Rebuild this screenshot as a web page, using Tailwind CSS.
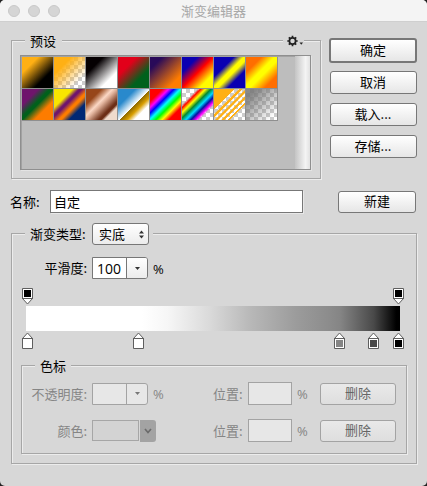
<!DOCTYPE html>
<html lang="zh-CN">
<head>
<meta charset="utf-8">
<title>渐变编辑器</title>
<script src="https://cdn.jsdelivr.net/npm/@tailwindcss/browser@4"></script>
</head>
<body class="bg-[#222] w-[427px] h-[486px] overflow-hidden font-['Noto_Sans_CJK_SC',sans-serif] text-[13px] leading-[16px] text-black">
<svg class="hidden">
  <defs>
    <g id="stop-up">
      <path d="M.5 6.5L5.5 1L10.5 6.5V16.5H.5Z" fill="#fff" stroke="#5e5e5e"/>
      <path d="M0 6.5H11" stroke="#5e5e5e"/>
    </g>
    <g id="stop-down">
      <path d="M.5 .5H10.5V10.5L5.5 16L.5 10.5Z" fill="#fff" stroke="#5e5e5e"/>
      <path d="M0 10.5H11" stroke="#5e5e5e"/>
    </g>
  </defs>
</svg>
<div class="flex flex-col w-[427px] h-[486px] rounded-[5px] bg-[#d7d7d7] overflow-hidden">
  <!-- title bar -->
  <header class="grid grid-cols-[62px_1fr_62px] items-center h-[22px] shrink-0 bg-[#f4f4f4] border-b border-[#cfcfcf]">
    <div class="flex gap-2 pl-2">
      <i class="size-3 rounded-full bg-[#d5d5d5] border border-[#c8c8c8]"></i>
      <i class="size-3 rounded-full bg-[#d5d5d5] border border-[#c8c8c8]"></i>
      <i class="size-3 rounded-full bg-[#d5d5d5] border border-[#c8c8c8]"></i>
    </div>
    <h1 class="text-center text-[#a8a8a8]">渐变编辑器</h1>
  </header>

  <!-- presets and actions -->
  <div class="flex mt-[11px] ml-[11px] h-[146px] shrink-0">
    <fieldset class="relative w-[310px] h-[146px] border border-[#a6a6a6] shadow-[1px_1px_0_#ececec,inset_1px_1px_0_#ececec]">
      <legend class="ml-[13px] pl-[5px] pr-[6px] h-[15px] leading-[15px] bg-[#d7d7d7]">预设</legend>
      <button class="absolute right-[16px] -top-[15px] flex items-center pl-1 h-[15px] bg-[#d7d7d7]">
        <svg width="17" height="12" viewBox="0 0 17 12">
          <g stroke="#222" fill="none">
            <circle cx="5.5" cy="6" r="3.100" stroke-width="1.7"/>
            <path d="M5.5 .8V3M5.5 9V11.2M.3 6H2.5M8.500 6H10.700M1.800 2.300L3.400 3.900M7.600 8.100L9.200 9.700M1.800 9.700L3.400 8.100M7.600 3.900L9.200 2.300" stroke-width="1.7"/>
          </g>
          <path d="M12.500 7.500H16L14.250 9.700Z" fill="#222"/>
        </svg>
      </button>
      <div class="flex justify-between mt-[7px] ml-[8px] w-[291px] h-[115px] bg-[#bdbdbd] border border-[#8f8f8f] shadow-[inset_1px_1px_0_#a2a2a2,1px_1px_0_#e4e4e4]">
        <div class="grid grid-cols-[repeat(8,31px)] grid-rows-[31px_31px] gap-px mt-px ml-px w-[256px] h-[64px] bg-[#8f8f8f]">
          <i class="bg-[linear-gradient(135deg,#ffb014_26%,#000_70%)]"></i>
          <i class="bg-[linear-gradient(135deg,#ffb014_28%,#ffb01400_80%),conic-gradient(#ccc_25%,#fff_0_50%,#ccc_0_75%,#fff_0)] bg-[size:auto,8px_8px]"></i>
          <i class="bg-[linear-gradient(135deg,#050002_28%,#fff_74%)]"></i>
          <i class="bg-[linear-gradient(135deg,#e2001a_30%,#00611c_70%)]"></i>
          <i class="bg-[linear-gradient(135deg,#290a59_20%,#ff7c00_80%)]"></i>
          <i class="bg-[linear-gradient(135deg,#0a00b2_25%,#ff0000_50%,#fffc00_78%)]"></i>
          <i class="bg-[linear-gradient(135deg,#0a00b2_32%,#fffc00_48%,#fffc00_56%,#0a00b2_72%)]"></i>
          <i class="bg-[linear-gradient(135deg,#ff6e00_25%,#ffff00_46%,#ffff00_56%,#ff6e00_80%)]"></i>
          <i class="bg-[linear-gradient(135deg,#6f156c_26%,#00601b_45%,#00601b_50%,#fd7c00_70%)]"></i>
          <i class="bg-[linear-gradient(135deg,#f9e600_30%,#6f156c_41%,#6f156c_45%,#fd7c00_57%,#fd7c00_61%,#002874_74%)]"></i>
          <i class="bg-[linear-gradient(135deg,#974619_25%,#fbd8c5_43%,#e0b29b_50%,#6c2e16_70%,#6c2e16_74%,#efdbcd_80%)]"></i>
          <i class="bg-[linear-gradient(135deg,#2989cc_28%,#fff_52%,#906a00_53%,#d99f00_64%,#fff_76%)]"></i>
          <i class="bg-[linear-gradient(135deg,red_20%,#f0f_30%,#00f_39%,#0ff_49%,#0f0_59%,#ff0_69%,red_80%)]"></i>
          <i class="bg-[linear-gradient(135deg,#f000_25%,red_30%,#ff0_38%,#083_47%,#0df_56%,#0012a0_64%,#f0f_72%,#f0f0_78%),conic-gradient(#ccc_25%,#fff_0_50%,#ccc_0_75%,#fff_0)] bg-[size:auto,8px_8px]"></i>
          <i class="bg-[linear-gradient(135deg,#ffb014_33%,#ffb01400_34%_40%,#ffb014_41%_46%,#ffb01400_47%_51%,#ffb014_52%_56%,#ffb01400_57%_61%,#ffb014_62%_66%,#ffb01400_67%_71%,#ffb014_72%_75%,#ffb01400_76%),conic-gradient(#ccc_25%,#fff_0_50%,#ccc_0_75%,#fff_0)] bg-[size:auto,8px_8px]"></i>
          <i class="bg-[linear-gradient(135deg,#777d_18%,#7770_88%),conic-gradient(#ccc_25%,#fff_0_50%,#ccc_0_75%,#fff_0)] bg-[size:auto,8px_8px]"></i>
        </div>
        <div class="w-[15px] bg-linear-to-r from-[#c4c4c4] via-[#f4f4f4] via-70% to-[#e2e2e2]"></div>
      </div>
    </fieldset>
    <div class="flex flex-col items-center ml-[8px] mt-[5px] w-[88px]">
      <button class="w-[88px] h-[25px] pb-px rounded-[3px] border-2 border-[#777] bg-linear-to-b from-white to-[#e6e6e6]">确定</button>
      <button class="mt-[8px] w-[87px] h-[23px] pb-px rounded-[3px] border border-[#777] bg-linear-to-b from-white to-[#e6e6e6]">取消</button>
      <button class="mt-[9px] w-[87px] h-[23px] pb-px rounded-[3px] border border-[#777] bg-linear-to-b from-white to-[#e6e6e6]">载入...</button>
      <button class="mt-[9px] w-[87px] h-[23px] pb-px rounded-[3px] border border-[#777] bg-linear-to-b from-white to-[#e6e6e6]">存储...</button>
    </div>
  </div>

  <!-- name -->
  <div class="flex items-center mt-[11px] pl-[10px] h-[23px] shrink-0">
    <label class="w-[40px]">名称:</label>
    <div class="flex items-center w-[253px] h-[23px] pl-[3px] bg-white border border-[#777] shadow-[1px_1px_0_#e8e8e8]">自定</div>
    <button class="ml-[35px] w-[78px] h-[22px] pb-px rounded-[3px] border border-[#777] bg-linear-to-b from-white to-[#e6e6e6]">新建</button>
  </div>

  <!-- gradient type -->
  <fieldset class="mt-[9px] ml-[11px] w-[406px] h-[242px] shrink-0 border border-[#a6a6a6] shadow-[1px_1px_0_#ececec,inset_1px_1px_0_#ececec]">
    <legend class="ml-[13px] h-[23px] w-[128px] bg-[#d7d7d7]">
      <div class="flex items-center h-[23px] pl-[5px] pt-px">
        <span class="w-[62px]">渐变类型:</span>
        <div class="flex items-center justify-between w-[57px] h-[22px] pl-[6px] pr-[3px] rounded-[3px] border border-[#777] bg-linear-to-b from-white to-[#ececec]">实底
          <svg width="7" height="9" viewBox="0 0 7 9"><path d="M1 3.500L3.500 .5L6 3.500ZM1 5.500L3.500 8.500L6 5.500Z" fill="#333"/></svg>
        </div>
      </div>
    </legend>
    <div class="flex items-center mt-[12px] h-[22px]">
      <label class="w-[80px] pr-[5px] text-right">平滑度:</label>
      <div class="flex w-[56px] h-[22px] border border-[#777] rounded-r-[3px] bg-white">
        <span class="w-[34px] pl-[4px] leading-[22px] border-r border-[#777] text-[14px] font-['Open_Sans',sans-serif]">100</span>
        <span class="flex flex-1 items-center justify-center rounded-r-[2px] bg-linear-to-b from-white to-[#ececec]"><svg width="5" height="3"><path d="M0 0H5L2.500 3Z" fill="#333"/></svg></span>
      </div>
      <span class="ml-[5px] pt-px font-['Open_Sans',sans-serif] text-[13px] font-medium">%</span>
    </div>

    <!-- gradient ramp with opacity stops above and colour stops below -->
    <div class="flex flex-col mt-[9px] ml-[10px] w-[384px]">
      <div class="flex justify-between w-[382px] h-[18px]">
        <svg width="11" height="17"><use href="#stop-down"/><rect x="2" y="2" width="7" height="7"/></svg>
        <svg width="11" height="17"><use href="#stop-down"/><rect x="2" y="2" width="7" height="7"/></svg>
      </div>
      <div class="ml-[4px] w-[374px] h-[25px] bg-[linear-gradient(90deg,#fff_0%,#fff_31%,#f6f6f6_38%,#dadada_49%,#b8b8b8_60%,#9c9c9c_72%,#8c8c8c_81%,#858585_84%,#494949_93%,#000_99%)]"></div>
      <div class="relative w-[382px] h-[18px] pt-px">
        <svg class="absolute left-0" width="11" height="17"><use href="#stop-up"/></svg>
        <svg class="absolute left-[111px]" width="11" height="17"><use href="#stop-up"/></svg>
        <svg class="absolute left-[312px]" width="11" height="17"><use href="#stop-up"/><rect x="2" y="8" width="7" height="7" fill="#858585"/></svg>
        <svg class="absolute left-[346px]" width="11" height="17"><use href="#stop-up"/><rect x="2" y="8" width="7" height="7" fill="#494949"/></svg>
        <svg class="absolute left-[371px]" width="11" height="17"><use href="#stop-up"/><rect x="2" y="8" width="7" height="7"/></svg>
      </div>
    </div>

    <!-- stop settings -->
    <fieldset class="mt-[9px] ml-[9px] w-[386px] h-[96px] border border-[#a6a6a6] shadow-[1px_1px_0_#ececec,inset_1px_1px_0_#ececec] text-[#858585]">
      <legend class="ml-[13px] px-[5px] h-[15px] leading-[15px] bg-[#d7d7d7] text-black">色标</legend>
      <div class="flex items-center mt-[9px] h-[23px]">
        <label class="w-[70px] pr-[5px] text-right whitespace-nowrap">不透明度:</label>
        <div class="flex w-[56px] h-[22px] border border-[#a3a3a3] rounded-r-[3px] bg-[#e7e7e7]">
          <span class="w-[34px] border-r border-[#a3a3a3]"></span>
          <span class="flex flex-1 items-center justify-center"><svg width="5" height="3"><path d="M0 0H5L2.500 3Z" fill="#777"/></svg></span>
        </div>
        <span class="ml-[5px] w-[60px] pt-px font-['Open_Sans',sans-serif] font-medium">%</span>
        <label class="w-[35px]">位置:</label>
        <div class="w-[44px] h-[23px] border border-[#a3a3a3] bg-[#e7e7e7]"></div>
        <span class="ml-[5px] w-[23px] pt-px font-['Open_Sans',sans-serif] font-medium">%</span>
        <button class="w-[76px] h-[22px] pb-px rounded-[3px] border border-[#a3a3a3] bg-linear-to-b from-[#e9e9e9] to-[#dedede] text-[#666]">删除</button>
      </div>
      <div class="flex items-center mt-[14px] h-[23px]">
        <label class="w-[70px] pr-[5px] text-right">颜色:</label>
        <div class="w-[47px] h-[21px] border border-[#a6a6a6] bg-[#d3d3d3]"></div>
        <div class="flex items-center justify-center ml-px w-[16px] h-[22px] rounded-r-[3px] bg-[#a3a3a3]"><svg width="8" height="6"><path d="M1 1L4 4.500L7 1" fill="none" stroke="#6b6b6b" stroke-width="1.700"/></svg></div>
        <label class="ml-[57px] w-[35px]">位置:</label>
        <div class="w-[44px] h-[23px] border border-[#a3a3a3] bg-[#e7e7e7]"></div>
        <span class="ml-[5px] w-[23px] pt-px font-['Open_Sans',sans-serif] font-medium">%</span>
        <button class="w-[76px] h-[22px] pb-px rounded-[3px] border border-[#a3a3a3] bg-linear-to-b from-[#e9e9e9] to-[#dedede] text-[#666]">删除</button>
      </div>
    </fieldset>
  </fieldset>
</div>
</body>
</html>
